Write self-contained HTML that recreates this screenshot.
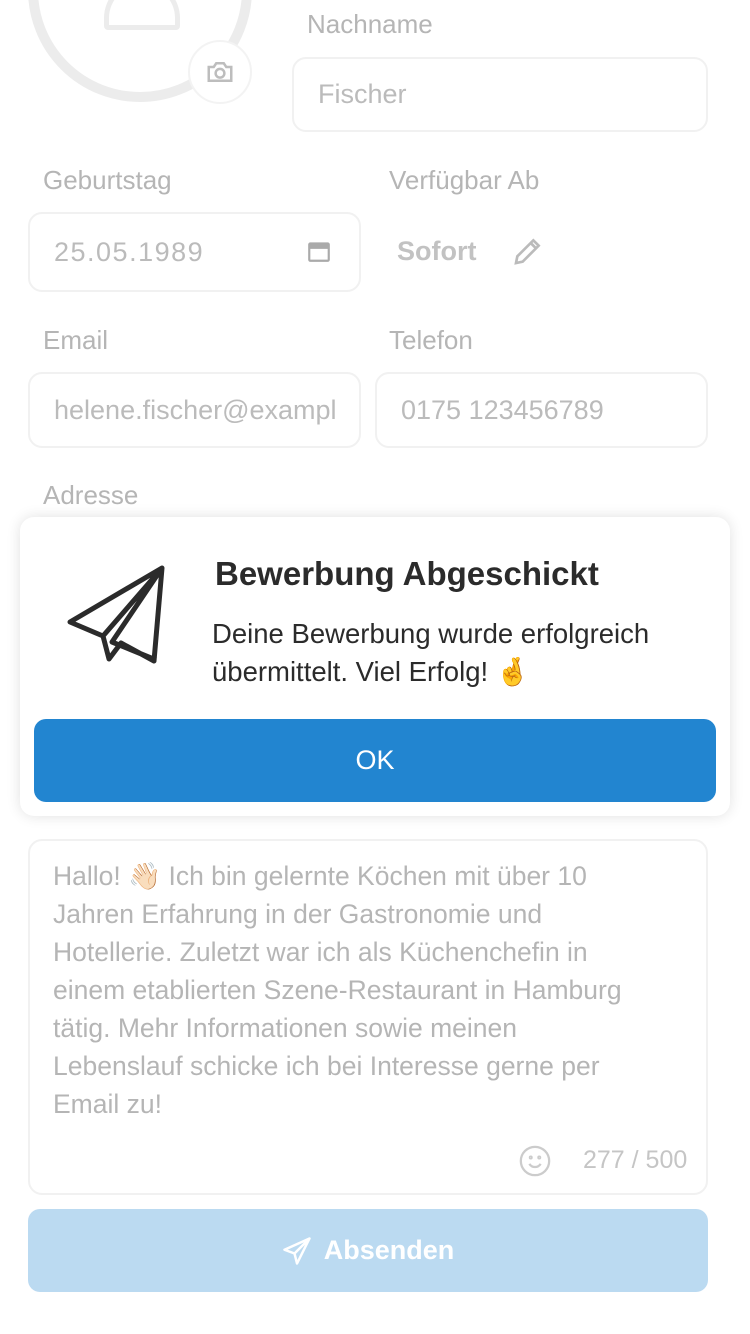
<!DOCTYPE html>
<html><head><meta charset="utf-8"><style>
*{margin:0;padding:0;box-sizing:border-box}
body{width:750px;height:1334px;background:#fff;font-family:"Liberation Sans",sans-serif;position:relative;overflow:hidden}
.a{position:absolute}
.lbl{position:absolute;font-size:26px;color:#b5b5b5}
.box{position:absolute;border:2px solid #f1f1f1;border-radius:14px;font-size:27px;color:#bbb;padding-left:24px;display:flex;align-items:center;white-space:nowrap;overflow:hidden}
</style></head><body>
<div class="a" style="left:28px;top:-122px;width:224px;height:224px;border-radius:50%;border:10px solid #ececec"></div>
<div class="a" style="left:104px;top:-20px;width:76px;height:50px;border:5px solid #ececec;border-radius:38px 38px 4px 4px"></div>
<div class="a" style="left:188px;top:40px;width:64px;height:64px;border-radius:50%;background:#fff;border:2px solid #f3f3f3"></div>
<svg class="a" style="left:205px;top:57px" width="30" height="30" viewBox="0 0 24 24" fill="none" stroke="#bdbdbd" stroke-width="2"><path d="M3 8h4l2-3h6l2 3h4v11H3z"/><circle cx="12" cy="13" r="3.5"/></svg>
<div class="lbl" style="left:307px;top:9px">Nachname</div>
<div class="box" style="left:292px;top:57px;width:416px;height:75px">Fischer</div>
<div class="lbl" style="left:43px;top:165px">Geburtstag</div>
<div class="box" style="left:28px;top:212px;width:333px;height:80px;letter-spacing:1.5px">25.05.1989</div>
<svg class="a" style="left:306px;top:238px" width="26" height="26" viewBox="0 0 24 24" fill="none" stroke="#aaa" stroke-width="2"><rect x="3" y="5" width="18" height="16" rx="1"/><path d="M3 8h18" stroke-width="4"/></svg>
<div class="lbl" style="left:389px;top:165px">Verfügbar Ab</div>
<div class="a" style="left:397px;top:236px;font-size:27px;font-weight:bold;color:#c2c2c2">Sofort</div>
<svg class="a" style="left:512px;top:235px" width="32" height="32" viewBox="0 0 24 24" fill="none" stroke="#bbb" stroke-width="2"><path d="M3 21l1-5L16 4l4 4L8 20z M14 6l4 4"/></svg>
<div class="lbl" style="left:43px;top:325px">Email</div>
<div class="box" style="left:28px;top:372px;width:333px;height:76px">helene.fischer@exampl</div>
<div class="lbl" style="left:389px;top:325px">Telefon</div>
<div class="box" style="left:375px;top:372px;width:333px;height:76px">0175 123456789</div>
<div class="lbl" style="left:43px;top:480px">Adresse</div>
<div class="a" style="left:20px;top:517px;width:710px;height:299px;background:#fff;border-radius:14px;box-shadow:0 0 14px rgba(0,0,0,.12)"></div>
<svg class="a" style="left:62px;top:562px" width="108" height="104" viewBox="0 0 108 104" fill="none" stroke="#2b2b2b" stroke-width="5" stroke-linejoin="round"><path d="M100 6L8 60l33 14 6 23 12-16 33 18z M100 6L41 74 M100 6L50 80l44 18"/></svg>
<div class="a" style="left:215px;top:555px;font-size:33px;font-weight:bold;color:#2b2b2b">Bewerbung Abgeschickt</div>
<div class="a" style="left:212px;top:615px;font-size:27.5px;line-height:38px;color:#2b2b2b;white-space:nowrap">Deine Bewerbung wurde erfolgreich<br>übermittelt. Viel Erfolg! 🤞</div>
<div class="a" style="left:34px;top:719px;width:682px;height:83px;background:#2285d0;border-radius:12px;color:#fff;font-size:27px;display:flex;align-items:center;justify-content:center">OK</div>
<div class="a" style="left:28px;top:839px;width:680px;height:356px;border:2px solid #f1f1f1;border-radius:14px"></div>
<div class="a" style="left:53px;top:857px;font-size:26.5px;line-height:38px;color:#b5b5b5;white-space:nowrap">Hallo! 👋🏻 Ich bin gelernte Köchen mit über 10<br>Jahren Erfahrung in der Gastronomie und<br>Hotellerie. Zuletzt war ich als Küchenchefin in<br>einem etablierten Szene-Restaurant in Hamburg<br>tätig. Mehr Informationen sowie meinen<br>Lebenslauf schicke ich bei Interesse gerne per<br>Email zu!</div>
<svg class="a" style="left:518px;top:1144px" width="34" height="34" viewBox="0 0 24 24" fill="none" stroke="#ccc" stroke-width="1.6"><circle cx="12" cy="12" r="10"/><path d="M8 14c2 3 6 3 8 0"/><circle cx="9" cy="9.5" r=".6"/><circle cx="15" cy="9.5" r=".6"/></svg>
<div class="a" style="left:583px;top:1146px;font-size:25px;color:#c5c5c5">277 / 500</div>
<div class="a" style="left:28px;top:1209px;width:680px;height:83px;background:#bbdaf1;border-radius:12px;color:#fff;font-size:27px;font-weight:bold;display:flex;align-items:center;justify-content:center"><svg width="30" height="30" viewBox="0 0 24 24" fill="none" stroke="#fff" stroke-width="2" stroke-linejoin="round" style="margin-right:12px"><path d="M22 2L2 11l8 3 2 8z M22 2L10 14"/></svg>Absenden</div>
</body></html>
